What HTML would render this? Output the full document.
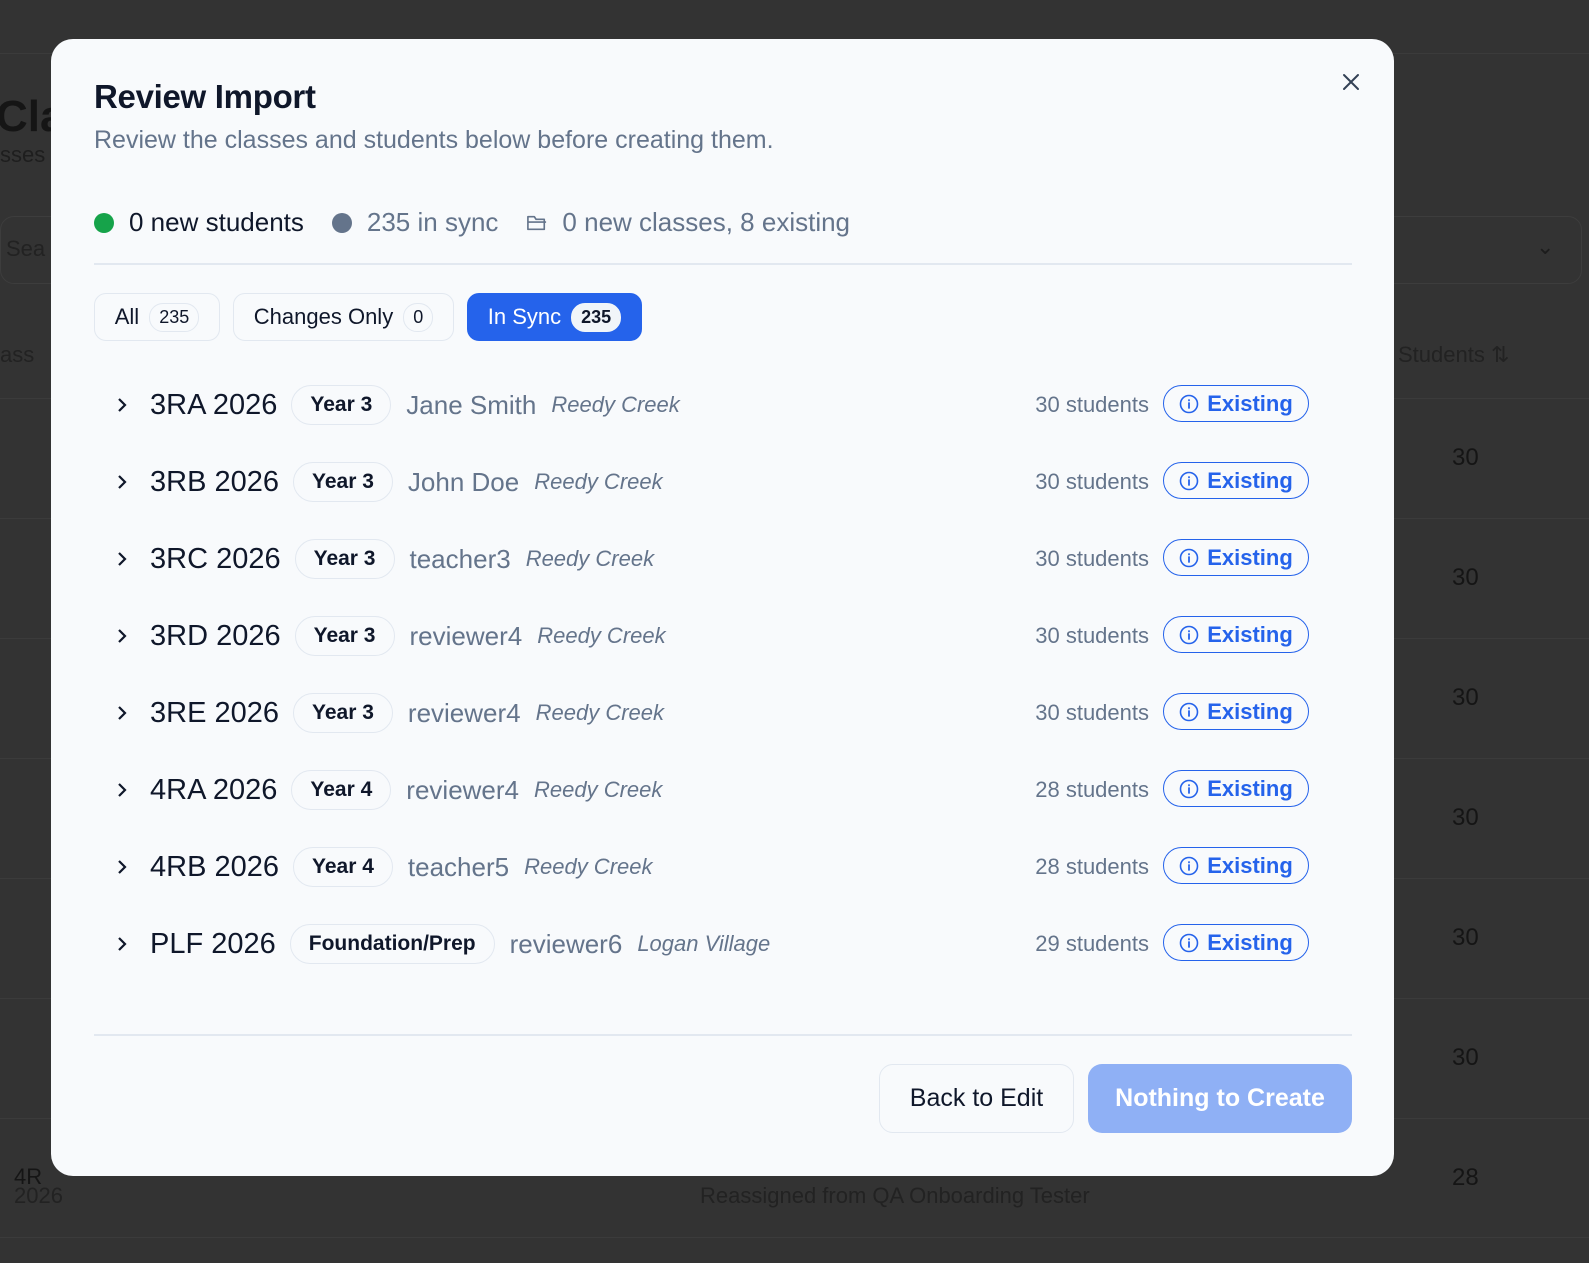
<!DOCTYPE html>
<html><head><meta charset="utf-8"><style>
*{box-sizing:border-box;margin:0;padding:0}
body{width:1589px;height:1263px;background:#333;font-family:"Liberation Sans",sans-serif;position:relative;overflow:hidden}
.bg{position:absolute;color:#151515;font-size:28px}
.bgs{position:absolute;color:#222;font-size:22px}
.hl{position:absolute;left:0;right:0;height:1px;background:#3b3b3b}
.modal{position:absolute;left:51px;top:39px;width:1343px;height:1137px;background:#f8fafc;border-radius:22px}
.title{position:absolute;left:43px;top:39px;font-size:33px;font-weight:bold;color:#0f172a;letter-spacing:-0.3px}
.sub{position:absolute;left:43px;top:87px;font-size:25px;color:#64748b}
.stats{position:absolute;left:43px;top:168px;font-size:26px;display:flex;align-items:center;white-space:nowrap}
.dot{width:20px;height:20px;border-radius:50%;display:inline-block;margin-right:15px}
.div{position:absolute;left:43px;right:42px;height:2px;background:#e2e8f0}
.tab{position:absolute;top:254px;height:48px;border:1px solid #e2e8f0;border-radius:12px;display:flex;align-items:center;justify-content:center;padding:0;font-size:22px;color:#0f172a;white-space:nowrap}
.cnt{margin-left:10px;border:1px solid #e2e8f0;border-radius:14px;padding:3px 9px;font-size:18px}
.row{position:absolute;left:60px;width:1200px;height:40px;display:flex;align-items:center;white-space:nowrap}
.chev{width:22px;margin-right:17px}
.name{font-size:29px;color:#0f172a;margin-right:14px}
.yr{border:1px solid #e2e8f0;border-radius:20px;height:40px;padding:0 18px;display:flex;align-items:center;font-size:21px;color:#0f172a;margin-right:15px;font-weight:bold}
.tch{font-size:26px;color:#64748b;margin-right:15px}
.sch{font-size:22px;color:#64748b;font-style:italic}
.cnts{position:absolute;right:162px;font-size:22px;color:#64748b;top:7px}
.ex{position:absolute;left:1052px;top:0;width:146px;height:37px;border:1.5px solid #2563eb;border-radius:19px;display:flex;align-items:center;justify-content:center;color:#2563eb;font-size:22px;font-weight:bold}
.ex svg{margin-right:8px}
.btn{position:absolute;top:1025px;height:69px;border-radius:14px;display:flex;align-items:center;justify-content:center;font-size:25px}
</style></head><body>
<div class="hl" style="top:53px"></div>
<div class="bg" style="left:-4px;top:92px;font-size:44px;font-weight:bold">Cla</div>
<div class="bgs" style="left:0;top:142px;color:#1e1e1e">sses</div>
<div style="position:absolute;left:0;top:216px;width:1582px;height:68px;border:1px solid #3d3d3d;border-radius:14px"></div>
<div class="bgs" style="left:6px;top:236px;color:#222">Sea</div>
<div class="bgs" style="left:1536px;top:234px;color:#1c1c1c">⌄</div>
<div class="bgs" style="left:0;top:342px">ass</div>
<div class="bgs" style="left:1398px;top:342px">Students ⇅</div>
<div class="hl" style="top:398px"></div>
<div class="bg" style="left:1452px;top:444px;font-size:24px">30</div>
<div class="hl" style="top:518px"></div>
<div class="bg" style="left:1452px;top:564px;font-size:24px">30</div>
<div class="hl" style="top:638px"></div>
<div class="bg" style="left:1452px;top:684px;font-size:24px">30</div>
<div class="hl" style="top:758px"></div>
<div class="bg" style="left:1452px;top:804px;font-size:24px">30</div>
<div class="hl" style="top:878px"></div>
<div class="bg" style="left:1452px;top:924px;font-size:24px">30</div>
<div class="hl" style="top:998px"></div>
<div class="bg" style="left:1452px;top:1044px;font-size:24px">30</div>
<div class="hl" style="top:1118px"></div>
<div class="bg" style="left:14px;top:1164px;font-size:22px">4R</div>
<div class="bgs" style="left:14px;top:1183px">2026</div>
<div class="bgs" style="left:700px;top:1183px">Reassigned from QA Onboarding Tester</div>
<div class="bg" style="left:1452px;top:1164px;font-size:24px">28</div>
<div class="hl" style="top:1237px"></div>

<div class="modal">
<svg style="position:absolute;left:1290px;top:33px" width="20" height="20" viewBox="0 0 20 20"><path d="M3 3L17 17M17 3L3 17" stroke="#334155" stroke-width="2" stroke-linecap="round"/></svg>
<div class="title">Review Import</div>
<div class="sub">Review the classes and students below before creating them.</div>
<div class="stats">
<span class="dot" style="background:#16a34a"></span><span style="color:#0f172a">0 new students</span>
<span class="dot" style="background:#64748b;margin-left:28px"></span><span style="color:#64748b">235 in sync</span>
<svg style="margin-left:28px;margin-right:14px" width="22" height="20" viewBox="0 0 24 22"><path d="M2 4h7l2 3h9v11H2z M2 10h20" fill="none" stroke="#64748b" stroke-width="1.8" stroke-linejoin="round"/></svg><span style="color:#64748b">0 new classes, 8 existing</span>
</div>
<div class="div" style="top:224px"></div>
<div class="tab" style="left:43px;width:126px">All<span class="cnt">235</span></div>
<div class="tab" style="left:182px;width:221px">Changes Only<span class="cnt">0</span></div>
<div class="tab" style="left:416px;width:175px;background:#2563eb;border-color:#2563eb;color:#fff">In Sync<span class="cnt" style="background:#f1f5f9;color:#0f172a;border-color:#f1f5f9;font-weight:bold">235</span></div>

<div class="row" style="top:346px"><svg class="chev" width="22" height="22" viewBox="0 0 22 22"><path d="M8 5l6 6-6 6" fill="none" stroke="#0f172a" stroke-width="2.2"/></svg><span class="name">3RA 2026</span><span class="yr">Year 3</span><span class="tch">Jane Smith</span><span class="sch">Reedy Creek</span><span class="cnts">30 students</span><span class="ex"><svg width="20" height="20" viewBox="0 0 20 20"><circle cx="10" cy="10" r="8.5" fill="none" stroke="#2563eb" stroke-width="1.6"/><path d="M10 9v5M10 6v.5" stroke="#2563eb" stroke-width="1.8" stroke-linecap="round"/></svg>Existing</span></div>
<div class="row" style="top:423px"><svg class="chev" width="22" height="22" viewBox="0 0 22 22"><path d="M8 5l6 6-6 6" fill="none" stroke="#0f172a" stroke-width="2.2"/></svg><span class="name">3RB 2026</span><span class="yr">Year 3</span><span class="tch">John Doe</span><span class="sch">Reedy Creek</span><span class="cnts">30 students</span><span class="ex"><svg width="20" height="20" viewBox="0 0 20 20"><circle cx="10" cy="10" r="8.5" fill="none" stroke="#2563eb" stroke-width="1.6"/><path d="M10 9v5M10 6v.5" stroke="#2563eb" stroke-width="1.8" stroke-linecap="round"/></svg>Existing</span></div>
<div class="row" style="top:500px"><svg class="chev" width="22" height="22" viewBox="0 0 22 22"><path d="M8 5l6 6-6 6" fill="none" stroke="#0f172a" stroke-width="2.2"/></svg><span class="name">3RC 2026</span><span class="yr">Year 3</span><span class="tch">teacher3</span><span class="sch">Reedy Creek</span><span class="cnts">30 students</span><span class="ex"><svg width="20" height="20" viewBox="0 0 20 20"><circle cx="10" cy="10" r="8.5" fill="none" stroke="#2563eb" stroke-width="1.6"/><path d="M10 9v5M10 6v.5" stroke="#2563eb" stroke-width="1.8" stroke-linecap="round"/></svg>Existing</span></div>
<div class="row" style="top:577px"><svg class="chev" width="22" height="22" viewBox="0 0 22 22"><path d="M8 5l6 6-6 6" fill="none" stroke="#0f172a" stroke-width="2.2"/></svg><span class="name">3RD 2026</span><span class="yr">Year 3</span><span class="tch">reviewer4</span><span class="sch">Reedy Creek</span><span class="cnts">30 students</span><span class="ex"><svg width="20" height="20" viewBox="0 0 20 20"><circle cx="10" cy="10" r="8.5" fill="none" stroke="#2563eb" stroke-width="1.6"/><path d="M10 9v5M10 6v.5" stroke="#2563eb" stroke-width="1.8" stroke-linecap="round"/></svg>Existing</span></div>
<div class="row" style="top:654px"><svg class="chev" width="22" height="22" viewBox="0 0 22 22"><path d="M8 5l6 6-6 6" fill="none" stroke="#0f172a" stroke-width="2.2"/></svg><span class="name">3RE 2026</span><span class="yr">Year 3</span><span class="tch">reviewer4</span><span class="sch">Reedy Creek</span><span class="cnts">30 students</span><span class="ex"><svg width="20" height="20" viewBox="0 0 20 20"><circle cx="10" cy="10" r="8.5" fill="none" stroke="#2563eb" stroke-width="1.6"/><path d="M10 9v5M10 6v.5" stroke="#2563eb" stroke-width="1.8" stroke-linecap="round"/></svg>Existing</span></div>
<div class="row" style="top:731px"><svg class="chev" width="22" height="22" viewBox="0 0 22 22"><path d="M8 5l6 6-6 6" fill="none" stroke="#0f172a" stroke-width="2.2"/></svg><span class="name">4RA 2026</span><span class="yr">Year 4</span><span class="tch">reviewer4</span><span class="sch">Reedy Creek</span><span class="cnts">28 students</span><span class="ex"><svg width="20" height="20" viewBox="0 0 20 20"><circle cx="10" cy="10" r="8.5" fill="none" stroke="#2563eb" stroke-width="1.6"/><path d="M10 9v5M10 6v.5" stroke="#2563eb" stroke-width="1.8" stroke-linecap="round"/></svg>Existing</span></div>
<div class="row" style="top:808px"><svg class="chev" width="22" height="22" viewBox="0 0 22 22"><path d="M8 5l6 6-6 6" fill="none" stroke="#0f172a" stroke-width="2.2"/></svg><span class="name">4RB 2026</span><span class="yr">Year 4</span><span class="tch">teacher5</span><span class="sch">Reedy Creek</span><span class="cnts">28 students</span><span class="ex"><svg width="20" height="20" viewBox="0 0 20 20"><circle cx="10" cy="10" r="8.5" fill="none" stroke="#2563eb" stroke-width="1.6"/><path d="M10 9v5M10 6v.5" stroke="#2563eb" stroke-width="1.8" stroke-linecap="round"/></svg>Existing</span></div>
<div class="row" style="top:885px"><svg class="chev" width="22" height="22" viewBox="0 0 22 22"><path d="M8 5l6 6-6 6" fill="none" stroke="#0f172a" stroke-width="2.2"/></svg><span class="name">PLF 2026</span><span class="yr">Foundation/Prep</span><span class="tch">reviewer6</span><span class="sch">Logan Village</span><span class="cnts">29 students</span><span class="ex"><svg width="20" height="20" viewBox="0 0 20 20"><circle cx="10" cy="10" r="8.5" fill="none" stroke="#2563eb" stroke-width="1.6"/><path d="M10 9v5M10 6v.5" stroke="#2563eb" stroke-width="1.8" stroke-linecap="round"/></svg>Existing</span></div>

<div class="div" style="top:995px"></div>
<div class="btn" style="left:828px;width:195px;border:1px solid #e2e8f0;color:#0f172a">Back to Edit</div>
<div class="btn" style="left:1037px;width:264px;background:#8fb0f5;color:#fff;font-weight:bold">Nothing to Create</div>
</div>
</body></html>
